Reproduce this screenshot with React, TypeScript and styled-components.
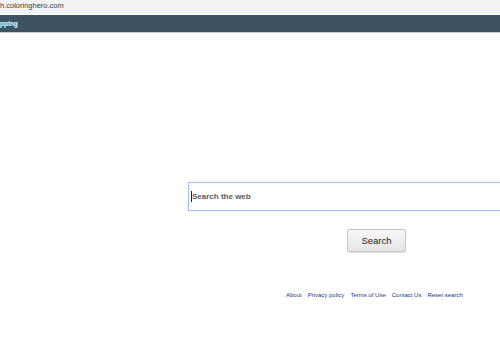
import * as React from 'react';
import styled, { createGlobalStyle } from 'styled-components';

const GlobalStyle = createGlobalStyle`
  html, body {
    margin: 0;
    padding: 0;
    background: #ffffff;
    overflow: hidden;
  }
  body {
    font-family: "Liberation Sans", Arial, sans-serif;
  }
`;

const footerLinks = ['About', 'Privacy policy', 'Terms of Use', 'Contact Us', 'Reset search'];

const App = () => {
  return (
    <Styled.Page>
      <GlobalStyle />
      <Styled.AddressBar>h.coloringhero.com</Styled.AddressBar>
      <Styled.NavBar>pping</Styled.NavBar>
      <Styled.Main>
        <Styled.SearchBox>
          <Styled.Caret />
          <Styled.Placeholder>Search the web</Styled.Placeholder>
        </Styled.SearchBox>
        <Styled.ButtonRow>
          <Styled.SearchButton>Search</Styled.SearchButton>
        </Styled.ButtonRow>
        <Styled.Footer>
          {footerLinks.map((label) => (
            <Styled.FooterLink key={label}>{label}</Styled.FooterLink>
          ))}
        </Styled.Footer>
      </Styled.Main>
    </Styled.Page>
  );
};

const Styled = {
  Page: styled.div`
    width: 500px;
    height: 350px;
    overflow: hidden;
    display: flex;
    flex-direction: column;
  `,
  AddressBar: styled.div`
    height: 14px;
    background: #f1f3f5;
    border-bottom: 1px solid #fbfcfc;
    font-size: 7.5px;
    line-height: 12px;
    color: #3a3d40;
    white-space: nowrap;
  `,
  NavBar: styled.div`
    height: 17px;
    background: #3f5261;
    border-bottom: 1px solid #c9cdd0;
    color: #ffffff;
    font-size: 6.5px;
    font-weight: bold;
    line-height: 17px;
    white-space: nowrap;
  `,
  Main: styled.main`
    display: flex;
    flex-direction: column;
    padding-top: 149px;
    padding-left: 188px;
  `,
  SearchBox: styled.div`
    width: 420px;
    height: 27px;
    border: 1px solid #a9bdee;
    box-shadow: 0 0 1px #c7d5f5;
    display: flex;
    align-items: center;
    padding-left: 2px;
    box-sizing: content-box;
  `,
  Caret: styled.span`
    width: 1px;
    height: 11px;
    background: #222;
  `,
  Placeholder: styled.span`
    font-size: 8px;
    font-weight: bold;
    color: #5a5a5a;
  `,
  ButtonRow: styled.div`
    display: flex;
    padding-left: 159px;
    margin-top: 18px;
  `,
  SearchButton: styled.button`
    width: 59px;
    height: 23px;
    padding: 0;
    border: 1px solid #c6c6c6;
    border-radius: 2px;
    background: linear-gradient(#f7f7f7, #e6e6e6);
    box-shadow: 0 1px 1px rgba(0, 0, 0, 0.12);
    font-family: "Liberation Sans", Arial, sans-serif;
    font-size: 9.5px;
    color: #222;
  `,
  Footer: styled.nav`
    display: flex;
    gap: 6px;
    padding-left: 98px;
    margin-top: 40px;
  `,
  FooterLink: styled.a`
    font-size: 6px;
    color: #22398a;
    text-decoration: none;
    white-space: nowrap;
  `,
};

export default App;
